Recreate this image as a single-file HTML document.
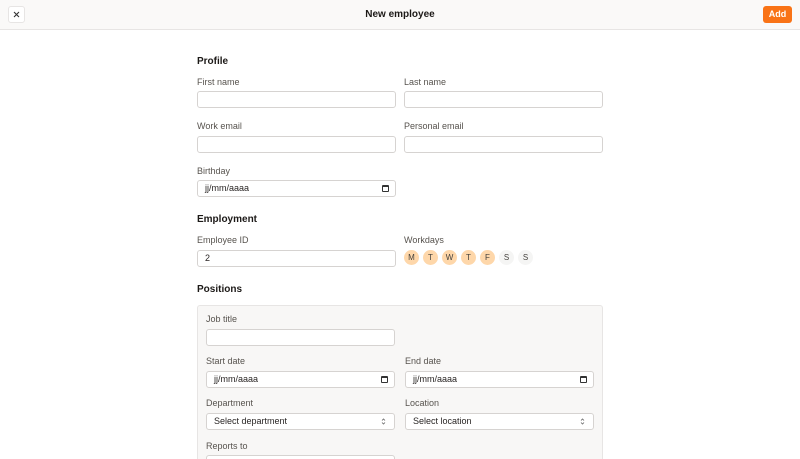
<!DOCTYPE html><html><head><style>
*{box-sizing:border-box;margin:0;padding:0}
html,body{width:800px;height:459px;overflow:hidden}
body{background:#fff;font-family:"Liberation Sans",sans-serif;position:relative;color:#1c1917}
.a{position:absolute}
.hdr{left:0;top:0;width:800px;height:30px;background:#faf9f8;border-bottom:1px solid #e7e5e4}
.lbl{font-size:9px;color:#57534e;line-height:11px}
.h{font-size:10px;font-weight:bold;color:#1c1917;line-height:12px}
.in{background:#fff;border:1px solid #d6d3d1;border-radius:3px;height:17px;font-size:9px;padding:0 7px;line-height:15px;color:#292524}
.cal{position:absolute;right:6px;top:4px;width:7px;height:7px;border:1.2px solid #333;border-top-width:2px;border-radius:1px}
.ch{position:absolute;right:8px;top:4px}
.d{width:15px;height:15px;border-radius:50%;font-size:8px;text-align:center;line-height:15px;color:#44403c}
</style></head><body>
<div class="a hdr"></div>
<div class="a" style="left:8px;top:6px;width:17px;height:17px;background:#fff;border:1px solid #e7e5e4;border-radius:3px"><svg width="15" height="15" viewBox="0 0 15 15" style="position:absolute;left:0;top:0"><path d="M5 5L10 10M10 5L5 10" stroke="#333" stroke-width="1.1"/></svg></div>
<div class="a" style="left:0;width:800px;top:9px;text-align:center;font-size:10px;font-weight:bold;line-height:12px">New employee</div>
<div class="a" style="left:763px;top:6px;width:29px;height:17px;background:#f97316;border-radius:3px;color:#fff;font-size:9px;font-weight:bold;text-align:center;line-height:17px">Add</div>

<div class="a h" style="left:197px;top:56px">Profile</div>
<div class="a lbl" style="left:197px;top:77px">First name</div>
<div class="a lbl" style="left:404px;top:77px">Last name</div>
<div class="a in" style="left:197px;top:91px;width:199px"></div>
<div class="a in" style="left:404px;top:91px;width:199px"></div>
<div class="a lbl" style="left:197px;top:121px">Work email</div>
<div class="a lbl" style="left:404px;top:121px">Personal email</div>
<div class="a in" style="left:197px;top:136px;width:199px"></div>
<div class="a in" style="left:404px;top:136px;width:199px"></div>
<div class="a lbl" style="left:197px;top:166px">Birthday</div>
<div class="a in" style="left:197px;top:180px;width:199px">jj/mm/aaaa<span class="cal"></span></div>

<div class="a h" style="left:197px;top:214px">Employment</div>
<div class="a lbl" style="left:197px;top:235px">Employee ID</div>
<div class="a lbl" style="left:404px;top:235px">Workdays</div>
<div class="a in" style="left:197px;top:250px;width:199px">2</div>
<div class="a d" style="left:404px;top:250px;background:#fed7aa">M</div>
<div class="a d" style="left:423px;top:250px;background:#fed7aa">T</div>
<div class="a d" style="left:442px;top:250px;background:#fed7aa">W</div>
<div class="a d" style="left:461px;top:250px;background:#fed7aa">T</div>
<div class="a d" style="left:480px;top:250px;background:#fed7aa">F</div>
<div class="a d" style="left:499px;top:250px;background:#f5f5f4">S</div>
<div class="a d" style="left:518px;top:250px;background:#f5f5f4">S</div>

<div class="a h" style="left:197px;top:284px">Positions</div>
<div class="a" style="left:197px;top:305px;width:406px;height:170px;background:#f8f7f6;border:1px solid #e7e5e4;border-radius:3px"></div>
<div class="a lbl" style="left:206px;top:314px">Job title</div>
<div class="a in" style="left:206px;top:329px;width:189px"></div>
<div class="a lbl" style="left:206px;top:356px">Start date</div>
<div class="a lbl" style="left:405px;top:356px">End date</div>
<div class="a in" style="left:206px;top:371px;width:189px">jj/mm/aaaa<span class="cal"></span></div>
<div class="a in" style="left:405px;top:371px;width:189px">jj/mm/aaaa<span class="cal"></span></div>
<div class="a lbl" style="left:206px;top:398px">Department</div>
<div class="a lbl" style="left:405px;top:398px">Location</div>
<div class="a in" style="left:206px;top:413px;width:189px">Select department<svg class="ch" width="5" height="7" viewBox="0 0 5 7"><path d="M1 2.5L2.5 1L4 2.5M1 4.5L2.5 6L4 4.5" stroke="#666" fill="none" stroke-width=".8"/></svg></div>
<div class="a in" style="left:405px;top:413px;width:189px">Select location<svg class="ch" width="5" height="7" viewBox="0 0 5 7"><path d="M1 2.5L2.5 1L4 2.5M1 4.5L2.5 6L4 4.5" stroke="#666" fill="none" stroke-width=".8"/></svg></div>
<div class="a lbl" style="left:206px;top:441px">Reports to</div>
<div class="a in" style="left:206px;top:455px;width:189px"></div>
</body></html>
